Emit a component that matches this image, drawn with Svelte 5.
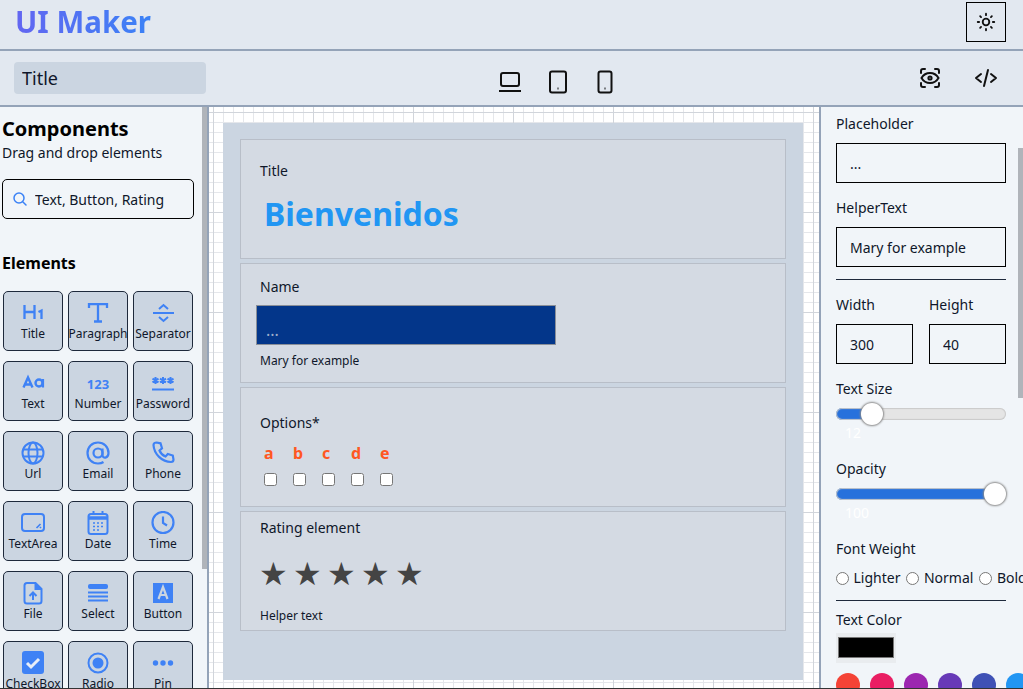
<script>
  const elements = [
    { name: "Title", icon: "h1" },
    { name: "Paragraph", icon: "t" },
    { name: "Separator", icon: "sep" },
    { name: "Text", icon: "aa" },
    { name: "Number", icon: "num" },
    { name: "Password", icon: "pass" },
    { name: "Url", icon: "globe" },
    { name: "Email", icon: "at" },
    { name: "Phone", icon: "phone" },
    { name: "TextArea", icon: "area" },
    { name: "Date", icon: "date" },
    { name: "Time", icon: "time" },
    { name: "File", icon: "file" },
    { name: "Select", icon: "select" },
    { name: "Button", icon: "button" },
    { name: "CheckBox", icon: "check" },
    { name: "Radio", icon: "radio" },
    { name: "Pin", icon: "pin" }
  ];
  const options = ["a", "b", "c", "d", "e"];
  const colors = ["#f44336", "#e91e63", "#9c27b0", "#673ab7", "#3f51b5", "#2196f3"];
</script>

<div class="app">
  <header class="top">
    <h1 class="logo">UI Maker</h1>
    <button class="theme" aria-label="Theme">
      <svg viewBox="0 0 24 24" width="22" height="22" fill="none" stroke="#111" stroke-width="2" stroke-linecap="round">
        <circle cx="12" cy="12" r="3.6" />
        <path d="M12 3v1.5M12 19.5V21M3 12h1.5M19.5 12H21M5.6 5.6l1 1M17.4 17.4l1 1M5.6 18.4l1-1M17.4 6.6l1-1" />
      </svg>
    </button>
  </header>

  <div class="tools">
    <input class="page-title" value="Title" />
    <div class="devices">
      <svg viewBox="0 0 24 22" width="24" height="22" fill="none" stroke="#111" stroke-width="2">
        <rect x="3" y="2" width="18" height="13" rx="2" />
        <path d="M1 20h22" />
      </svg>
      <svg class="tablet" viewBox="0 0 20 24" width="20" height="24" fill="none" stroke="#111" stroke-width="2">
        <rect x="2" y="1.5" width="16" height="21" rx="2" />
        <path d="M9.5 18.5h1" />
      </svg>
      <svg viewBox="0 0 16 24" width="16" height="24" fill="none" stroke="#111" stroke-width="2">
        <rect x="1.5" y="1.5" width="13" height="21" rx="2" />
        <path d="M7.5 18.5h1" />
      </svg>
    </div>
    <div class="actions">
      <svg viewBox="0 0 24 24" width="24" height="24" fill="none" stroke="#111" stroke-width="2" stroke-linecap="round">
        <path d="M3 7V5a2 2 0 0 1 2-2h2M17 3h2a2 2 0 0 1 2 2v2M21 17v2a2 2 0 0 1-2 2h-2M7 21H5a2 2 0 0 1-2-2v-2" />
        <path d="M3.5 12c2-3.4 5-5 8.500-5s6.500 1.600 8.500 5c-2 3.400-5 5-8.500 5s-6.500-1.600-8.500-5z" />
        <circle cx="12" cy="12" r="1.600" />
      </svg>
      <svg viewBox="0 0 24 24" width="24" height="24" fill="none" stroke="#111" stroke-width="2" stroke-linecap="round" stroke-linejoin="round">
        <path d="M7 8l-5 4 5 4M17 8l5 4-5 4M14 4l-4 16" />
      </svg>
    </div>
  </div>

  <main class="body">
    <aside class="side">
      <h2>Components</h2>
      <p class="sub">Drag and drop elements</p>
      <label class="search">
        <svg viewBox="0 0 16 16" width="16" height="16" fill="none" stroke="#3b82f6" stroke-width="1.500" stroke-linecap="round">
          <circle cx="7" cy="7" r="5" />
          <path d="M11 11l3 3" />
        </svg>
        <input value="Text, Button, Rating" />
      </label>
      <h3>Elements</h3>
      <div class="grid">
        {#each elements as el}
          <button class="el">
            <svg viewBox="0 0 24 24" width="24" height="24" fill="none" stroke="#3f82f5" stroke-width="2">
              {#if el.icon === "h1"}
                <path d="M3.500 4v14M13.500 4v14M3.500 11h10" stroke-width="2.300" />
                <path d="M17.500 11l3-1.500V18" stroke-width="2.300" />
              {:else if el.icon === "t"}
                <path d="M3 7V3.200h18V7M12 3v17.500M8 20.500h8" stroke-width="2.300" />
              {:else if el.icon === "sep"}
                <path d="M2 12h21" />
                <path d="M8 8l4.500-4 4.500 4M8 16l4.500 4 4.500-4" stroke-width="2" />
              {:else if el.icon === "aa"}
                <path d="M2.500 16.500l4.500-10 4.500 10M4.500 13.500h5" stroke-width="2.400" />
                <circle cx="18" cy="12" r="3.500" stroke-width="2.400" />
                <path d="M22 8v8.500" stroke-width="2.200" />
              {:else if el.icon === "num"}
                <text x="12" y="18" text-anchor="middle" font-size="13" font-weight="700" fill="#3f82f5" stroke="none">123</text>
              {:else if el.icon === "pass"}
                <path d="M1 18.500h22" stroke-width="2.200" />
                <path d="M4.500 6v7M1.500 7.700l6 3.600M7.500 7.700l-6 3.600M12 6v7M9 7.700l6 3.600M15 7.700l-6 3.600M19.500 6v7M16.500 7.700l6 3.600M22.500 7.700l-6 3.600" stroke-width="2" />
              {:else if el.icon === "globe"}
                <circle cx="12" cy="12" r="10.500" />
                <ellipse cx="12" cy="12" rx="4.500" ry="10.500" />
                <path d="M2 8.500h20M2 15.500h20" />
              {:else if el.icon === "at"}
                <path d="M22.500 12c0-6-4.500-10.500-10.500-10.500S1.500 6 1.500 12 6 22.500 12 22.500c2 0 4-.4 5.500-1.500" stroke-width="2.200" />
                <circle cx="12" cy="12" r="4.500" stroke-width="2.200" />
                <path d="M16.500 7.500V14c0 4 6 3.500 6-2" stroke-width="2.200" />
              {:else if el.icon === "phone"}
                <path d="M5.500 1.500l4 .8 1.500 5-2.500 2.200c1 2.600 3.400 5 6 6l2.300-2.500 5 1.500.7 4c0 1.500-1 2.500-2.500 2.500C11 21 3 13 2.500 4c0-1.500 1.500-2.500 3-2.500z" stroke-width="2.200" />
              {:else if el.icon === "area"}
                <rect x="1" y="3" width="22" height="17" rx="3" />
                <path d="M15.500 17l4-4M19 17l1-1" stroke-width="1.700" />
              {:else if el.icon === "date"}
                <rect x="2.500" y="3" width="19" height="20" rx="2.500" />
                <path d="M2.500 7h19" stroke-width="3.500" />
                <path d="M7.500 0v4M16.500 0v4" />
                <path d="M7 12h2M11 12h2M15 12h2M7 15.500h2M11 15.500h2M15 15.500h2M7 19h2M11 19h2" stroke-width="1.500" />
              {:else if el.icon === "time"}
                <circle cx="12" cy="11.500" r="10.500" stroke-width="2.200" />
                <path d="M12 5.500v6.500l4 2.500" stroke-width="2.200" />
              {:else if el.icon === "file"}
                <path d="M6 2h8.500l6 6V20a2.500 2.500 0 0 1-2.500 2.500H6A2.500 2.500 0 0 1 3.500 20V4.500A2.500 2.500 0 0 1 6 2z" />
                <path d="M14.500 2v6h6" fill="#3f82f5" />
                <path d="M12 19v-7M8.500 15l3.500-3.500 3.500 3.500" />
              {:else if el.icon === "select"}
                <rect x="2" y="3" width="20" height="5" rx="2" fill="#3f82f5" stroke="none" />
                <path d="M2 11.500h20M2 15.500h20M2 19.500h20" stroke-width="1.800" />
              {:else if el.icon === "button"}
                <rect x="2" y="2" width="20" height="20" fill="#3f82f5" stroke="none" />
                <path d="M7.500 18L12 6l4.500 12M9 14h6" stroke="#cbd5e1" stroke-width="2.200" />
              {:else if el.icon === "check"}
                <rect x="1" y="0" width="22" height="23" rx="3" fill="#3f82f5" stroke="none" />
                <path d="M6 12l4 4 8-8" stroke="#e8eef8" stroke-width="3" />
              {:else if el.icon === "radio"}
                <circle cx="12" cy="12" r="9.500" />
                <circle cx="12" cy="12" r="5.500" fill="#3f82f5" stroke="none" />
              {:else if el.icon === "pin"}
                <g fill="#3f82f5" stroke="none">
                  <circle cx="4.500" cy="12" r="2.700" />
                  <circle cx="12" cy="12" r="2.700" />
                  <circle cx="19.500" cy="12" r="2.700" />
                </g>
              {/if}
            </svg>
            <span>{el.name}</span>
          </button>
        {/each}
      </div>
      <div class="thumb side-thumb"></div>
    </aside>

    <section class="canvas">
      <div class="page">
        <div class="card title-card">
          <span class="lbl">Title</span>
          <div class="big">Bienvenidos</div>
        </div>
        <div class="card name-card">
          <span class="lbl">Name</span>
          <input class="name-input" placeholder="..." />
          <small>Mary for example</small>
        </div>
        <div class="card opts-card">
          <span class="lbl">Options*</span>
          <div class="opts">
            {#each options as o}
              <label class="opt">
                <span>{o}</span>
                <input type="checkbox" />
              </label>
            {/each}
          </div>
        </div>
        <div class="card rate-card">
          <span class="lbl">Rating element</span>
          <div class="stars">★★★★★</div>
          <small>Helper text</small>
        </div>
      </div>
    </section>

    <aside class="panel">
      <div class="field">
        <span>Placeholder</span>
        <input value="..." />
      </div>
      <div class="field last">
        <span>HelperText</span>
        <input value="Mary for example" />
      </div>
      <hr />
      <div class="pair">
        <div class="field">
          <span>Width</span>
          <input value="300" />
        </div>
        <div class="field">
          <span>Height</span>
          <input value="40" />
        </div>
      </div>
      <div class="slider">
        <span>Text Size</span>
        <input type="range" min="0" max="100" value="17" style="--fill: 21%" />
        <output>12</output>
      </div>
      <div class="slider">
        <span>Opacity</span>
        <input type="range" min="0" max="100" value="100" style="--fill: 100%" />
        <output>100</output>
      </div>
      <div class="weight">
        <span>Font Weight</span>
        <div class="radios">
          <label><input type="radio" name="w" />Lighter</label>
          <label><input type="radio" name="w" />Normal</label>
          <label><input type="radio" name="w" />Bold</label>
        </div>
      </div>
      <hr />
      <div class="color">
        <span>Text Color</span>
        <input type="color" value="#000000" />
        <div class="dots">
          {#each colors as c}
            <i style="background: {c}"></i>
          {/each}
        </div>
      </div>
      <div class="thumb panel-thumb"></div>
    </aside>
  </main>
</div>

<style>
  :global(body) {
    margin: 0;
    overflow: hidden;
    background: #f1f5f9;
  }

  .app {
    width: 1023px;
    height: 689px;
    box-sizing: border-box;
    display: flex;
    flex-direction: column;
    font-family: "Noto Sans", sans-serif;
    font-size: 14px;
    color: #0f172a;
    background: #e2e8f0;
    border-bottom: 1px solid #333;
    overflow: hidden;
  }

  .top {
    height: 51px;
    flex: none;
    box-sizing: border-box;
    display: flex;
    justify-content: space-between;
    align-items: flex-start;
    padding: 2px 17px 0 15px;
    border-bottom: 2px solid #94a3b8;
  }

  .logo {
    margin: 0;
    font-size: 29.5px;
    line-height: 40px;
    font-weight: 700;
    background: linear-gradient(90deg, #6366f1, #3b82f6);
    -webkit-background-clip: text;
    background-clip: text;
    color: transparent;
  }

  .theme {
    width: 40px;
    height: 40px;
    padding: 0;
    display: grid;
    place-items: center;
    background: none;
    border: 1px solid #000;
  }

  .tools {
    height: 56px;
    flex: none;
    box-sizing: border-box;
    display: flex;
    align-items: center;
    padding: 0 25px 0 14px;
    border-bottom: 2px solid #94a3b8;
  }

  .page-title {
    width: 192px;
    height: 32px;
    box-sizing: border-box;
    border: 0;
    border-radius: 4px;
    padding: 0 8px;
    background: #cbd5e1;
    font: inherit;
    font-size: 18px;
    color: #0f172a;
  }

  .devices {
    margin-left: 292px;
    display: flex;
    gap: 29px;
    align-items: center;
    padding-top: 8px;
  }

  .devices .tablet {
    margin-left: -3px;
  }

  .actions {
    margin-left: auto;
    display: flex;
    gap: 32px;
    padding-bottom: 1px;
  }

  .body {
    flex: 1;
    min-height: 0;
    display: flex;
  }

  .thumb {
    position: absolute;
    width: 5px;
    background: #b0b4ba;
  }

  .side-thumb {
    top: 0;
    right: 0;
    height: 462px;
  }

  .panel-thumb {
    top: 41px;
    right: 0;
    height: 250px;
  }

  .side {
    position: relative;
    width: 209px;
    flex: none;
    box-sizing: border-box;
    padding: 8px 0 0 2px;
    background: #f1f5f9;
    border-right: 2px solid #94a3b8;
    overflow: hidden;
  }

  .side h2 {
    margin: 0;
    font-size: 20px;
    line-height: 28px;
    font-weight: 700;
    color: #000;
  }

  .sub {
    margin: 0 0 16px;
    line-height: 20px;
  }

  .search {
    width: 192px;
    height: 40px;
    box-sizing: border-box;
    display: flex;
    align-items: center;
    gap: 7px;
    padding-left: 9px;
    border: 1px solid #000;
    border-radius: 5px;
  }

  .search input {
    border: 0;
    background: none;
    outline: 0;
    width: 150px;
    padding: 0;
    font: inherit;
    color: #0f172a;
  }

  .side h3 {
    margin: 33px 0 17px;
    font-size: 16px;
    line-height: 22px;
    font-weight: 700;
    color: #000;
  }

  .grid {
    display: grid;
    grid-template-columns: repeat(3, 60px);
    grid-auto-rows: 60px;
    gap: 10px 5px;
    padding-left: 1px;
  }

  .el {
    box-sizing: border-box;
    display: flex;
    flex-direction: column;
    align-items: center;
    justify-content: flex-start;
    gap: 1px;
    padding: 9px 0 0;
    overflow: hidden;
    background: #cbd5e1;
    border: 1px solid #1e293b;
    border-radius: 5px;
    font: inherit;
    font-size: 12px;
    line-height: 16px;
    color: #0f172a;
    white-space: nowrap;
  }

  .el svg {
    flex: none;
  }

  .canvas {
    flex: 1;
    min-width: 0;
    padding: 16px 0 0 14px;
    overflow: hidden;
    background-color: #fff;
    background-image:
      linear-gradient(#d1d5db 1px, transparent 1px),
      linear-gradient(90deg, #d1d5db 1px, transparent 1px),
      linear-gradient(#e5e7eb 1px, transparent 1px),
      linear-gradient(90deg, #e5e7eb 1px, transparent 1px);
    background-size: 100px 100px, 100px 100px, 10px 10px, 10px 10px;
    background-position: 4px 5px, 4px 5px, 4px 5px, 4px 5px;
  }

  .page {
    width: 580px;
    height: 557px;
    box-sizing: border-box;
    padding: 16px 17px;
    display: flex;
    flex-direction: column;
    gap: 4px;
    background: #cbd5e1;
  }

  .card {
    height: 120px;
    flex: none;
    box-sizing: border-box;
    display: flex;
    flex-direction: column;
    align-items: flex-start;
    padding-left: 19px;
    background: #d4dae3;
    border: 1px solid #b8bec8;
  }

  .lbl {
    line-height: 20px;
  }

  small {
    font-size: 12px;
    line-height: 16px;
  }

  .title-card {
    padding-top: 21px;
  }

  .big {
    margin: 11px 0 0 4px;
    font-size: 32px;
    line-height: 44px;
    font-weight: 700;
    color: #2196f3;
  }

  .name-card {
    padding-top: 13px;
  }

  .name-input {
    width: 300px;
    height: 40px;
    box-sizing: border-box;
    margin: 8px 0 8px -4px;
    padding: 10px 9px 0;
    background: #03368a;
    border: 1px solid #8a8f98;
    font: inherit;
    font-size: 16px;
    color: #fff;
  }

  .name-input::placeholder {
    color: #9fb0cc;
  }

  .opts-card {
    padding-top: 25px;
  }

  .opts {
    display: flex;
    gap: 16px;
    margin: 10px 0 0 4px;
  }

  .opt {
    width: 13px;
    display: flex;
    flex-direction: column;
    gap: 10px;
    line-height: 20px;
    font-size: 16px;
    font-weight: 700;
    color: #ff5722;
  }

  .opt input {
    margin: 0;
  }

  .rate-card {
    padding-top: 6px;
  }

  .stars {
    font-family: "DejaVu Sans", sans-serif;
    font-size: 32px;
    line-height: 40px;
    letter-spacing: 5.3px;
    color: #444;
    margin: 16px 0 14px -1px;
    white-space: nowrap;
  }

  .panel {
    position: relative;
    width: 204px;
    flex: none;
    box-sizing: border-box;
    padding: 7px 0 0 15px;
    background: #f1f5f9;
    border-left: 2px solid #94a3b8;
    overflow: hidden;
  }

  .field {
    display: flex;
    flex-direction: column;
    gap: 9px;
    margin-bottom: 15px;
    line-height: 20px;
  }

  .field.last {
    margin-bottom: 12px;
  }

  .field input {
    width: 170px;
    height: 40px;
    box-sizing: border-box;
    padding: 0 13px;
    background: none;
    border: 1px solid #000;
    font: inherit;
    color: #0f172a;
  }

  hr {
    width: 170px;
    margin: 0;
    border: 0;
    border-top: 1px solid #1e293b;
  }

  .pair {
    margin-top: 15px;
    display: grid;
    grid-template-columns: 77px 77px;
    gap: 16px;
  }

  .pair .field input {
    width: 77px;
  }

  .slider {
    height: 80px;
    line-height: 20px;
  }

  .slider > span {
    display: block;
  }

  .slider input {
    display: block;
    width: 170px;
    height: 24px;
    margin: 3px 0 0;
    appearance: none;
    -webkit-appearance: none;
    background: none;
  }

  .slider input::-webkit-slider-runnable-track {
    height: 12px;
    border-radius: 6px;
    background: linear-gradient(90deg, #2771dc var(--fill), #e5e5e5 var(--fill));
    box-shadow: inset 0 0 1px 1px #c9c9c9;
  }

  .slider input::-webkit-slider-thumb {
    -webkit-appearance: none;
    width: 22px;
    height: 22px;
    margin-top: -5px;
    border-radius: 50%;
    background: #fff;
    box-shadow: 0 0 2px 1px #8a8a8a;
  }

  output {
    display: block;
    margin: -3px 0 0 9px;
    color: #fff;
    line-height: 20px;
  }

  .weight {
    line-height: 20px;
    margin-bottom: 12px;
  }

  .radios {
    display: flex;
    gap: 6px;
    margin-top: 9px;
    white-space: nowrap;
    width: 200px;
  }

  .radios label {
    display: flex;
    align-items: center;
    gap: 4.5px;
  }

  .radios input {
    margin: 0;
  }

  .color {
    margin-top: 9px;
    line-height: 20px;
  }

  .color > span {
    display: block;
  }

  .color input {
    display: block;
    width: 60px;
    height: 30px;
    box-sizing: border-box;
    margin: 3px 0 10px;
    padding: 4px 2px 5px;
    border: 0;
    background: #e9ecef;
  }

  .color input::-webkit-color-swatch-wrapper {
    padding: 0;
  }

  .dots {
    display: flex;
    gap: 10px;
    width: 220px;
  }

  .dots i {
    width: 24px;
    height: 24px;
    flex: none;
    border-radius: 50%;
  }
</style>
